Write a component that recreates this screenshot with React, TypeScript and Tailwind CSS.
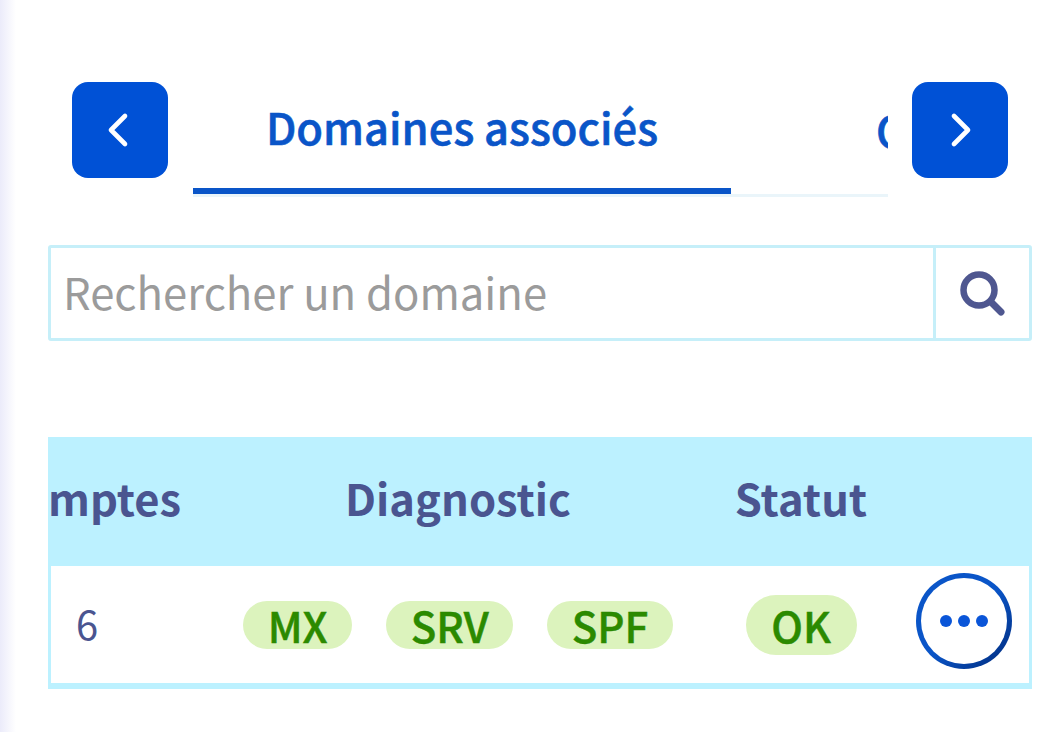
import { ChevronLeft, ChevronRight } from "lucide-react";

const FONT = "font-['Noto_Sans_CJK_SC','Source_Sans_Pro','Noto_Sans',sans-serif]";

function Pill({ label, tall }: { label: string; tall?: boolean }) {
  return (
    <span
      className={`flex items-center justify-center rounded-full bg-[#dcf3bd] text-[42px] leading-none font-medium text-[#2b8a00] [-webkit-text-stroke:0.5px_#2b8a00] ${
        tall ? "h-[60px] w-[111px]" : "h-[48px] px-[24.5px]"
      }`}
    >
      {label}
    </span>
  );
}

function NavButton({ children }: { children: React.ReactNode }) {
  return (
    <button className="flex size-[96px] shrink-0 items-center justify-center rounded-[16px] bg-[#0051d6] text-white">
      {children}
    </button>
  );
}

export default function App() {
  return (
    <div
      className={`${FONT} h-[732px] w-full overflow-hidden bg-[linear-gradient(to_right,#ebebfa,#ffffff_16px)] pt-[82px] pr-[26px] pl-[48px]`}
    >
      {/* Onglets */}
      <div className="flex px-[24px]">
        <NavButton>
          <ChevronLeft size={56} strokeWidth={2} className="-ml-[5px]" />
        </NavButton>
        <div className="mr-[24px] ml-[25px] flex h-[115px] min-w-0 flex-1 overflow-hidden border-b-[3px] border-[#eaf5fa]">
          <div className="flex h-[112px] w-[538px] shrink-0 items-center justify-center border-b-[6px] border-[#0a55c8] pb-[16px] text-[43.5px] leading-none font-medium whitespace-nowrap text-[#0a55c8] [-webkit-text-stroke:0.6px_#0a55c8]">
            Domaines associés
          </div>
          <div className="flex h-[112px] shrink-0 items-center pb-[16px] pl-[145px] text-[43.5px] leading-none font-medium whitespace-nowrap text-[#0a55c8] [-webkit-text-stroke:0.6px_#0a55c8]">
            Comptes associés
          </div>
        </div>
        <NavButton>
          <ChevronRight size={56} strokeWidth={2} className="ml-[2px]" />
        </NavButton>
      </div>

      {/* Recherche */}
      <div className="mt-[48px] flex h-[96px] rounded-[3px] border-[3px] border-[#c6eff9]">
        <input
          placeholder="Rechercher un domaine"
          className="min-w-0 flex-1 bg-transparent pb-[4px] pl-[12px] text-[43.6px] leading-none outline-none placeholder:text-[#9b9b9b]"
        />
        <div className="flex w-[96px] items-center justify-center border-l-[3px] border-[#c6eff9]">
          <svg width="48" height="48" viewBox="0 0 48 48" fill="none" stroke="#4f5790" strokeLinecap="round" className="-ml-[2px]">
            <circle cx="21" cy="21" r="15.5" strokeWidth="6.5" />
            <path d="M33 33 L43 43" strokeWidth="7" />
          </svg>
        </div>
      </div>

      {/* Tableau */}
      <div className="mt-[96px] border-x-[3px] border-b-[6px] border-[#bcf1ff]">
        <div className="grid h-[129px] grid-cols-[159px_496px_190px_1fr] items-center bg-[#bcf1ff] pb-[7px] text-[43.5px] leading-[60px] font-bold text-[#4a5590]">
          <div className="flex justify-end overflow-hidden pr-[29px]">Comptes</div>
          <div className="text-center">Diagnostic</div>
          <div className="text-center">Statut</div>
          <div />
        </div>
        <div className="grid h-[117px] grid-cols-[159px_496px_190px_1fr] items-center">
          <div className="pb-[3px] pl-[25px] text-[40px] leading-none text-[#4a5590]">6</div>
          <div className="flex justify-center gap-[34px]">
            <Pill label="MX" />
            <Pill label="SRV" />
            <Pill label="SPF" />
          </div>
          <div className="flex justify-center">
            <Pill label="OK" tall />
          </div>
          <div className="relative">
            <button className="absolute top-[-52px] left-[20px] size-[96px] rounded-full bg-[linear-gradient(135deg,#0a55c8_50%,#002a7a)] p-[5px]">
              <span className="flex size-full items-center justify-center gap-[6px] rounded-full bg-white">
                <span className="size-[12px] rounded-full bg-[#0a55d8]" />
                <span className="size-[12px] rounded-full bg-[#0a55d8]" />
                <span className="size-[12px] rounded-full bg-[#0a55d8]" />
              </span>
            </button>
          </div>
        </div>
      </div>
    </div>
  );
}
